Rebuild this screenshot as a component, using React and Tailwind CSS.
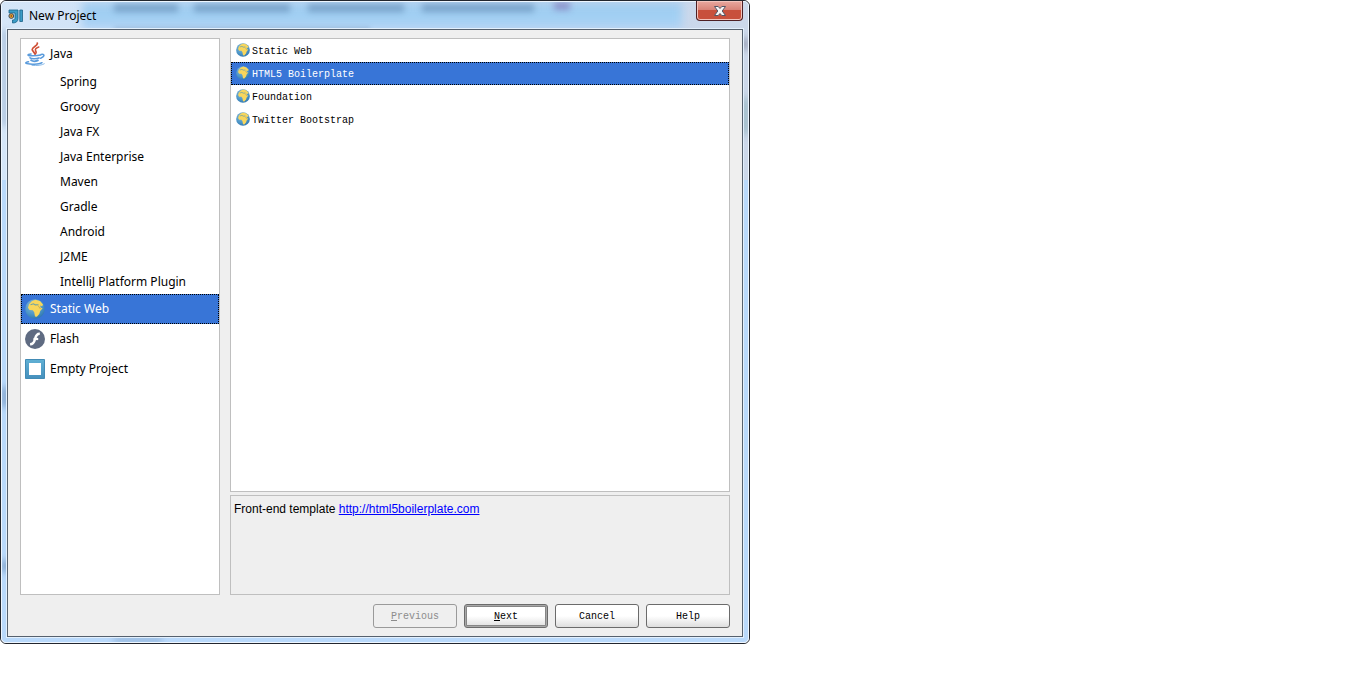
import { useState } from 'react'
import clsx from 'clsx'

const CATEGORIES = [
  { name: 'Java', icon: JavaIcon },
  { name: 'Spring' },
  { name: 'Groovy' },
  { name: 'Java FX' },
  { name: 'Java Enterprise' },
  { name: 'Maven' },
  { name: 'Gradle' },
  { name: 'Android' },
  { name: 'J2ME' },
  { name: 'IntelliJ Platform Plugin' },
  { name: 'Static Web', icon: GlobeIcon },
  { name: 'Flash', icon: FlashIcon },
  { name: 'Empty Project', icon: EmptyIcon },
]

const TEMPLATES = ['Static Web', 'HTML5 Boilerplate', 'Foundation', 'Twitter Bootstrap']

function IdeaLogo() {
  return (
    <svg viewBox="0 0 16 16" className="relative h-4 w-4 shrink-0">
      <path d="M1 2h9v8.500c0 3-2 4.500-5.500 4.500v-3c1.700 0 2.500-.8 2.500-2V5H1z" fill="#3a9cc6" stroke="#1b6288" strokeWidth=".8" />
      <path d="M11.800 2h2.700v11.500h-2.700z" fill="#3a9cc6" stroke="#1b6288" strokeWidth=".8" />
      <circle cx="3.300" cy="8" r="2.400" fill="#f5a02c" stroke="#3b4f60" />
      <circle cx="3.300" cy="8" r=".8" fill="#5b3a1a" />
    </svg>
  )
}

function JavaIcon({ className }) {
  return (
    <svg viewBox="0 0 20 24" className={clsx(className, 'h-6')} fill="none" strokeLinecap="round">
      <path d="M12.300 1c1 3-6 4-5 7 .4 1.300 2 2 2.700 4" stroke="#cf4f35" strokeWidth="1.700" />
      <path d="M13.800 5c-3 1-4 2.300-3.200 3.800.9 1.300.9 2.200-.3 3.200" stroke="#cf4f35" strokeWidth="1.500" />
      <path d="M6 12c-4 .5-4 1.500-.5 1.700 3.500.2 7.500 0 10-.7" stroke="#5a9bdc" strokeWidth="1.600" />
      <path d="M16 12.500c4-1 4 2-.3 3.700" stroke="#5a9bdc" strokeWidth="1.500" />
      <path d="M5 15.800c1 1.200 6.500 1.200 9 .2M6 18.300c1.500 1 5 1 7 .1" stroke="#5a9bdc" strokeWidth="1.700" />
      <path d="M3.500 19.800c-4 .8-3.500 1.800 1.500 2.200 5 .4 10 .1 12-1.300" stroke="#5a9bdc" strokeWidth="1.500" />
      <path d="M7 23.400c5 .4 10 0 12.300-1.600" stroke="#8bbbe8" />
    </svg>
  )
}

function GlobeIcon({ className }) {
  return (
    <svg viewBox="0 0 20 20" className={className}>
      <defs>
        <radialGradient id="sea" cx=".4" cy=".3" r=".75">
          <stop offset="0" stopColor="#8fbcd4" />
          <stop offset=".6" stopColor="#4f98c9" />
          <stop offset="1" stopColor="#2d74ae" />
        </radialGradient>
      </defs>
      <circle cx="10" cy="10" r="9.800" fill="url(#sea)" />
      <path d="M4 5.200L7 2l3.500-1.200L15 2l3 3.500-.8 1.800-2.200-.8.8 2.300 1.800.4-2.400 2.800-.9 3-2.500 2.800-1.800-.3-.8-4.200-1.400-2.100-3.300-.3-1.500-2.200.6-1.900z" fill="#f8d65c" />
      <path d="M5.500 5.700l3-.9 1.800 1.100 3.200-.2" fill="none" stroke="#6fa3a6" strokeWidth="1.100" />
      <path d="M13 6.500l2.500 3.500" stroke="#c0a750" strokeWidth=".8" />
    </svg>
  )
}

function FlashIcon({ className }) {
  return (
    <svg viewBox="0 0 20 20" className={className}>
      <circle cx="10" cy="10" r="10" fill="#5f6b82" />
      <path d="M14.800 4.700c-3-.2-3.900 2-4.700 5-.8 3.400-1.900 5.600-5 5.600" fill="none" stroke="#fff" strokeWidth="2.500" />
      <path d="M8.500 10h4.700" stroke="#fff" strokeWidth="2.200" />
    </svg>
  )
}

function EmptyIcon({ className }) {
  return (
    <svg viewBox="0 0 20 20" className={className}>
      <defs>
        <linearGradient id="frame" x2="0" y2="1">
          <stop offset="0" stopColor="#60b0d4" />
          <stop offset="1" stopColor="#4690bd" />
        </linearGradient>
      </defs>
      <path d="M.5.5h19v19H.5z" fill="url(#frame)" stroke="#428bb5" />
      <path d="M4 4h12v12H4z" fill="#fff" />
    </svg>
  )
}

// window frame with the blurred desktop showing through it
function Glass() {
  return (
    <div aria-hidden="true" className="absolute inset-0 overflow-hidden rounded-[5px] border border-[#eef6ff] bg-[#b9d9fb]">
      <div className="absolute top-0 left-0 h-[178px] w-full bg-linear-to-r from-[#d5e6f8] via-[#c4daf4] to-[#ccd8ea]" />
      <div className="absolute top-0 left-20 h-7 w-[600px] bg-linear-to-b from-[#a3cbee] via-[#9fd0f4] to-[#b4d2f3] blur-[4px]" />
      <div className="absolute top-0.5 left-28 h-2 w-16 bg-[#4f78a3]/50 blur-[3px]" />
      <div className="absolute top-0.5 left-[192px] h-2 w-24 bg-[#4f78a3]/50 blur-[3px]" />
      <div className="absolute top-0.5 left-[306px] h-2 w-24 bg-[#4f78a3]/50 blur-[3px]" />
      <div className="absolute top-0.5 left-[420px] h-2 w-28 bg-[#4f78a3]/50 blur-[3px]" />
      <div className="absolute top-0 left-[552px] h-2 w-4 bg-[#7a6bb0]/60 blur-[3px]" />
      <div className="absolute top-[25px] left-28 h-1 w-64 bg-[#6f93bd]/40 blur-[2px]" />
      <div className="absolute top-7 left-0 h-24 w-1.5 bg-[#8fa9c9]/60 blur-[3px]" />
      <div className="absolute top-9 right-0 h-3 w-1.5 bg-[#70748c]/60 blur-[3px]" />
      <div className="absolute top-24 right-0 h-9 w-1.5 bg-[#5f9298]/60 blur-[4px]" />
      <div className="absolute top-[385px] left-0 h-5 w-1.5 bg-[#567aa6]/60 blur-[3px]" />
      <div className="absolute top-[558px] left-0 h-3 w-1.5 bg-[#567aa6]/60 blur-[3px]" />
      <div className="absolute bottom-0 left-28 h-1 w-12 bg-[#567aa6]/50 blur-[3px]" />
    </div>
  )
}

function TitleBar() {
  return (
    <header className="relative flex h-[27px] items-center gap-1 pl-1.5 font-['Noto_Sans',sans-serif] text-[12px]">
      <IdeaLogo />
      <h1 className="pl-px">New Project</h1>
      <button
        type="button"
        aria-label="Close"
        className="absolute -top-px right-[5px] flex h-5 w-[47px] items-center justify-center rounded-b-[4px] border border-t-0 border-[#4d1f24] bg-linear-to-b from-[#e9a9a0] from-0% via-[#d98479] via-45% to-[#c8503c] to-50% shadow-[inset_0_0_0_1px_#f3c4bc]"
      >
        <svg viewBox="0 0 12 10" className="h-2.5 w-3">
          <path d="M.5.5h3.700L6 2.500 7.800.5h3.700L8.200 5l3.300 4.500H7.800L6 7.500l-1.800 2H.5L3.800 5z" fill="#f6f6f6" stroke="#535666" />
        </svg>
      </button>
    </header>
  )
}

function CategoryList({ selected, onSelect }) {
  return (
    <ul className="w-[200px] shrink-0 border border-[#bfbfbf] bg-white font-['Noto_Sans',sans-serif] text-[12px]">
      {CATEGORIES.map(({ name, icon: Icon }) => (
        <li key={name}>
          <button
            type="button"
            onClick={() => onSelect(name)}
            className={clsx(
              'flex w-full items-center gap-[5px] border border-dotted text-left',
              Icon ? 'h-[30px] pl-[3px]' : 'h-[25px] pl-[38px]',
              selected === name ? 'border-black bg-[#3875d7] text-white' : 'border-transparent',
            )}
          >
            {Icon && <Icon className="h-5 w-5" />}
            {name}
          </button>
        </li>
      ))}
    </ul>
  )
}

function TemplateList({ selected, onSelect }) {
  return (
    <ul className="min-h-[454px] flex-1 border border-[#bfbfbf] bg-white">
      {TEMPLATES.map((name) => (
        <li key={name}>
          <button
            type="button"
            onClick={() => onSelect(name)}
            className={clsx(
              'flex h-[23px] w-full items-center gap-0.5 border border-dotted pb-px pl-1 text-left',
              selected === name ? 'border-black bg-[#3875d7] text-white' : 'border-transparent',
            )}
          >
            <GlobeIcon className="h-3.5 w-3.5" />
            <span className="pt-0.5">{name}</span>
          </button>
        </li>
      ))}
    </ul>
  )
}

function DialogButton({ primary, disabled, children }) {
  return (
    <button
      type="button"
      disabled={disabled}
      className={clsx(
        'h-6 w-[84px] rounded-[3px] border',
        disabled && 'border-[#9a9a9a] text-[#8c8c8c]',
        !disabled && 'border-[#6b6b6b] bg-linear-to-b from-white via-white to-[#dedede]',
        primary && 'shadow-[inset_0_0_0_1px_#a8a8a8,inset_0_0_0_2px_#868686]',
      )}
    >
      {children}
    </button>
  )
}

export default function App() {
  const [category, setCategory] = useState('Static Web')
  const [template, setTemplate] = useState('HTML5 Boilerplate')

  return (
    <div className="relative w-full max-w-[750px] rounded-md border border-[#22262e] p-px text-black">
      <Glass />
      <TitleBar />
      <main className="relative mx-[5px] mb-[5px] flex flex-col gap-[9px] border border-[#56616e] bg-[#efefef] px-3 py-2 font-['Liberation_Mono',monospace] text-[10px] shadow-[0_0_0_1px_#e3f0fd]">
        <div className="flex gap-2.5">
          <CategoryList selected={category} onSelect={setCategory} />
          <div className="flex min-w-0 flex-1 flex-col gap-[3px]">
            <TemplateList selected={template} onSelect={setTemplate} />
            <p className="h-[100px] border border-[#bfbfbf] px-[3px] pt-[5px] font-['Liberation_Sans',sans-serif] text-[12px] leading-4">
              Front-end template{' '}
              <a href="http://html5boilerplate.com" className="text-[#0000ff] underline">http://html5boilerplate.com</a>
            </p>
          </div>
        </div>
        <div className="flex justify-end gap-[7px]">
          <DialogButton disabled>
            <u>P</u>revious
          </DialogButton>
          <DialogButton primary>
            <u>N</u>ext
          </DialogButton>
          <DialogButton>Cancel</DialogButton>
          <DialogButton>Help</DialogButton>
        </div>
      </main>
    </div>
  )
}
